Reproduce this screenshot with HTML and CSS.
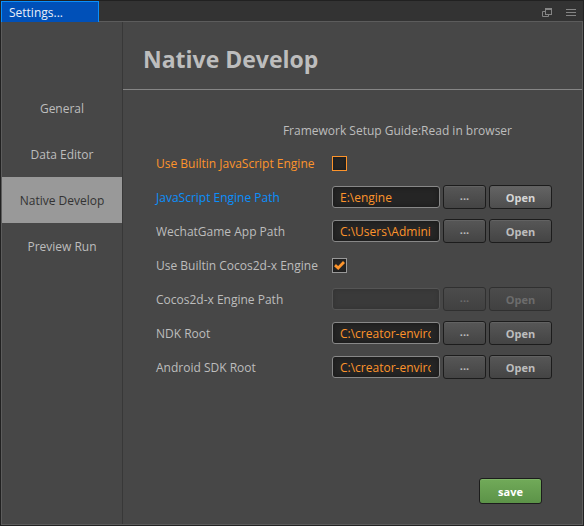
FILE: index.html
```html
<!DOCTYPE html>
<html lang="en">
<head>
<meta charset="utf-8">
<title>Settings</title>
<link rel="stylesheet" href="styles.css">
</head>
<body>
<div class="window">
  <header class="tabs">
    <button class="tab" type="button">Settings...</button>
    <div class="tools">
      <button class="tool" type="button" aria-label="Pop out">
        <svg width="10" height="10" viewBox="0 0 10 10" fill="none" stroke="currentColor"><path d="M3.500 1V6.500M9.500 1V6.500" /><path d="M3 1H10" stroke-width="2"/><path d="M3 6.500H10M3 3.500H.5V8.500H6.500V7"/></svg>
      </button>
      <button class="tool" type="button" aria-label="Menu">
        <svg width="10" height="8" viewBox="0 0 10 8" fill="currentColor"><path d="M0 0h10v1H0zM0 3h10v1H0zM0 6h10v1H0z"/></svg>
      </button>
    </div>
  </header>
  <div class="panel">
    <nav class="side">
      <a href="#general">General</a>
      <a href="#data">Data Editor</a>
      <a href="#native" class="active" aria-current="page">Native Develop</a>
      <a href="#preview">Preview Run</a>
    </nav>
    <main class="main">
      <h1>Native Develop</h1>
      <form class="form">
        <p class="guide">Framework Setup Guide:<a href="#guide">Read in browser</a></p>
        <div class="row changed">
          <label for="js-builtin">Use Builtin JavaScript Engine</label>
          <input type="checkbox" id="js-builtin">
        </div>
        <div class="row focused">
          <label for="js-path">JavaScript Engine Path</label>
          <input type="text" id="js-path" value="E:\engine">
          <button class="btn browse" type="button">...</button>
          <button class="btn open hover" type="button">Open</button>
        </div>
        <div class="row">
          <label for="wechat">WechatGame App Path</label>
          <input type="text" id="wechat" value="C:\Users\Adminis">
          <button class="btn browse" type="button">...</button>
          <button class="btn open" type="button">Open</button>
        </div>
        <div class="row">
          <label for="cocos-builtin">Use Builtin Cocos2d-x Engine</label>
          <span class="check">
            <input type="checkbox" id="cocos-builtin" checked>
            <svg width="11" height="9" viewBox="0 0 11 9" fill="none" stroke="currentColor" stroke-width="2.8"><path d="M1 4.100L4.200 7L10 1.100"/></svg>
          </span>
        </div>
        <div class="row">
          <label for="cocos">Cocos2d-x Engine Path</label>
          <input type="text" id="cocos" disabled>
          <button class="btn browse" type="button" disabled>...</button>
          <button class="btn open" type="button" disabled>Open</button>
        </div>
        <div class="row">
          <label for="ndk">NDK Root</label>
          <input type="text" id="ndk" value="C:\creator-environment\ndk">
          <button class="btn browse" type="button">...</button>
          <button class="btn open" type="button">Open</button>
        </div>
        <div class="row">
          <label for="sdk">Android SDK Root</label>
          <input type="text" id="sdk" value="C:\creator-environment\sdk">
          <button class="btn browse" type="button">...</button>
          <button class="btn open" type="button">Open</button>
        </div>
        <button class="btn save" type="submit">save</button>
      </form>
    </main>
  </div>
</div>
</body>
</html>
```
FILE: styles.css
```css
* { box-sizing: border-box; }
body {
  margin: 0;
  background: #212121;
  color: #bdbdbd;
  font: 12px/16px "Open Sans", "Noto Sans", sans-serif;
}
button, input { font: inherit; color: inherit; margin: 0; }
a { color: inherit; text-decoration: none; }
.window {
  display: flex;
  flex-direction: column;
  min-height: 100vh;
  padding: 1px;
}
.tabs {
  display: flex;
  justify-content: space-between;
  height: 20px;
  background: #333;
}
.tab {
  width: 98px;
  height: 21px;
  padding: 2px 7px 0;
  border: 1px solid #0a8ffc;
  border-bottom: 0;
  background: #0050b8;
  color: #e8eef8;
  text-align: left;
  line-height: 18px;
  position: relative;
  z-index: 1;
}
.tools { display: flex; gap: 14px; padding: 4px 7px 0 0; }
.tool {
  display: flex;
  align-items: center;
  width: 10px;
  height: 16px;
  padding: 0;
  border: 0;
  background: none;
  color: #858585;
}
.panel {
  flex: 1;
  display: flex;
  background: #474747;
  border: 1px solid #5c5c5c;
}
.side {
  width: 121px;
  padding-top: 63px;
  border-right: 1px solid #383838;
  text-align: center;
}
.side a { display: block; padding-top: 2px; line-height: 44px; }
.side .active { background: #999; color: #333; }
.main { flex: 1; min-width: 0; }
h1 {
  margin: 0;
  padding: 22px 20px 15px;
  border-bottom: 1px solid #858585;
  font-size: 23px;
  line-height: 30px;
}
.form {
  display: flex;
  flex-direction: column;
  gap: 10px;
  padding: 29px 30px 20px 33px;
}
.guide { margin: 0 40px 2px 0; padding-top: 4px; text-align: right; }
.row { display: flex; align-items: center; gap: 3px; height: 24px; }
.row label { width: 173px; padding-top: 2px; }
.changed label { color: #fd942b; }
.focused label { color: #0a8ffc; }
input[type="text"] {
  flex: 1;
  min-width: 0;
  height: 22px;
  padding: 0 8px 0 7px;
  border: 1px solid #888;
  border-radius: 3px;
  background: #252525;
  box-shadow: inset 0 0 4px 1px #1c1c1c;
  color: #fd942b;
}
input[type="checkbox"] {
  appearance: none;
  width: 15px;
  height: 15px;
  border: 1px solid #999;
  background: #252525;
  box-shadow: inset 0 0 3px #1a1a1a;
}
.changed input[type="checkbox"] { border-color: #fd942b; }
.check { display: grid; color: #fd942b; }
.check > * { grid-area: 1 / 1; place-self: center; }
.check svg { pointer-events: none; }
.btn {
  height: 24px;
  padding: 2px 0 0;
  border: 1px solid #1c1c1c;
  border-radius: 3px;
  background: linear-gradient(#575757, #444);
  box-shadow: inset 0 1px #626262;
  font-size: 11px;
  font-weight: 700;
}
.browse { width: 43px; padding: 0 0 2px; }
.open { width: 63px; }
.hover { background: linear-gradient(#646464, #4e4e4e); color: #d6d6d6; }
input[type="text"]:disabled { background: #3a3a3a; border-color: #555; box-shadow: inset 0 0 4px #333; }
.btn:disabled { border-color: #303030; background: linear-gradient(#4c4c4c, #414141); box-shadow: none; color: #6c6c6c; }
.save {
  align-self: flex-end;
  width: 63px;
  height: 26px;
  margin: 89px 10px 0 0;
  background: linear-gradient(#71aa59, #5c9348);
  box-shadow: inset 0 1px #7db466;
  color: #fff;
}
```
